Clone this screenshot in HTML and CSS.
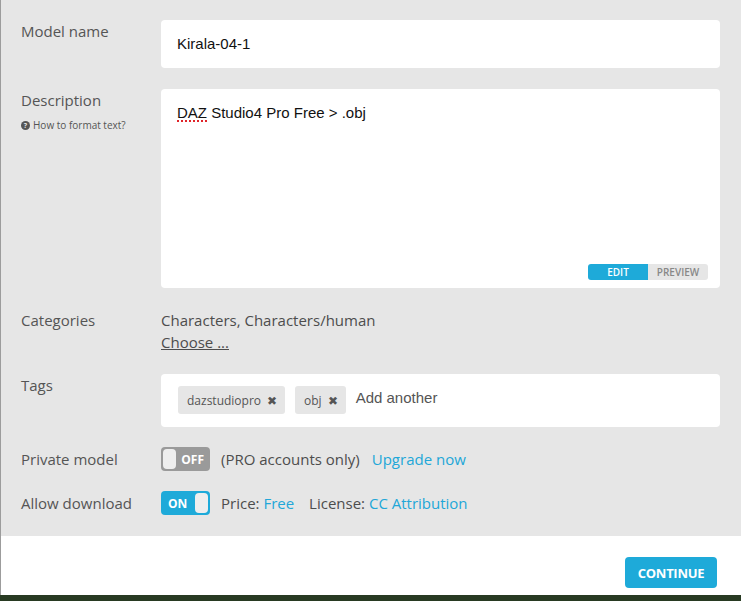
FILE: index.html
```html
<!DOCTYPE html>
<html lang="en">
<head>
    <meta charset="UTF-8">
    <title>Model settings</title>
    <link rel="stylesheet" href="styles.css">
</head>
<body>

    <div class="modal">
        <div class="form">
            <div class="row">
                <div class="label">Model name</div>
                <div class="field">
                    <div class="input">Kirala-04-1</div>
                </div>
            </div>

            <div class="row">
                <div class="label">
                    Description
                    <div class="help">
                        <span class="help-icon">?</span>
                        How to format text?
                    </div>
                </div>
                <div class="field">
                    <div class="textarea">
                        <span class="misspelled">DAZ</span> Studio4 Pro Free &gt; .obj
                        <div class="mode">
                            <span class="mode-btn active">Edit</span>
                            <span class="mode-btn">Preview</span>
                        </div>
                    </div>
                </div>
            </div>

            <div class="row">
                <div class="label">Categories</div>
                <div class="field text">
                    <div>Characters, Characters/human</div>
                    <div><a class="choose" href="#">Choose ...</a></div>
                </div>
            </div>

            <div class="row">
                <div class="label">Tags</div>
                <div class="field">
                    <div class="tags">
                        <span class="tag">dazstudiopro <span class="tag-x">&#10006;</span></span>
                        <span class="tag">obj <span class="tag-x">&#10006;</span></span>
                        <span class="tag-input">Add another</span>
                    </div>
                </div>
            </div>

            <div class="row short">
                <div class="label">Private model</div>
                <div class="field inline">
                    <span class="switch off"><span class="knob"></span><span class="switch-text">OFF</span></span>
                    <span class="note spaced-sm">(PRO accounts only)</span>
                    <a class="link" href="#">Upgrade now</a>
                </div>
            </div>

            <div class="row short">
                <div class="label">Allow download</div>
                <div class="field inline">
                    <span class="switch on"><span class="switch-text">ON</span><span class="knob"></span></span>
                    <span class="note spaced">Price: <a class="link" href="#">Free</a></span>
                    <span class="note">License: <a class="link" href="#">CC Attribution</a></span>
                </div>
            </div>
        </div>

        <div class="footer">
            <button class="button">Continue</button>
        </div>
    </div>

</body>
</html>
```

FILE: styles.css
```css
body {
    margin: 0;
    padding: 0;
    font-family: "Open Sans", sans-serif;
    background-color: #283a22; /* тёмный фон сцены под окном */
    height: 601px;
    overflow: hidden;
}

.modal {
    border-left: 1px solid #9c9c9c;
    width: 740px;
}

.form {
    background-color: #e6e6e6;
    padding: 20px 21px 21px 20px;
    display: flex;
    flex-direction: column;
    gap: 21px;
}

.row {
    display: grid;
    grid-template-columns: 140px 1fr;
}

.row.short {
    margin-top: -1px;
}

.label {
    font-size: 15px;
    line-height: 22px;
    color: #555;
}

.short .label {
    line-height: 24px;
}

.help {
    font-size: 10px;
    line-height: 14px;
    margin-top: 7px;
    display: flex;
    align-items: center;
    gap: 3px;
}

.help-icon {
    width: 9px;
    height: 9px;
    border-radius: 50%;
    background-color: #555;
    color: #e6e6e6;
    font-size: 7px;
    line-height: 9px;
    font-weight: bold;
    text-align: center;
}

.input {
    background-color: #fff;
    border-radius: 4px;
    height: 48px;
    line-height: 48px;
    padding: 0 16px;
    font-family: "Liberation Sans", Arial, sans-serif;
    font-size: 15px;
    color: #111;
}

.textarea {
    position: relative;
    background-color: #fff;
    border-radius: 4px;
    height: 199px;
    box-sizing: border-box;
    padding: 14px 16px;
    font-family: "Liberation Sans", Arial, sans-serif;
    font-size: 15px;
    line-height: 20px;
    color: #111;
}

.misspelled {
    text-decoration: underline dotted #e0242a;
    text-decoration-thickness: 2px;
    text-underline-offset: 2px;
}

/* переключатель edit / preview */
.mode {
    position: absolute;
    right: 12px;
    bottom: 8px;
    display: flex;
    border-radius: 3px;
    overflow: hidden;
}

.mode-btn {
    width: 60px;
    height: 16px;
    line-height: 16px;
    text-align: center;
    font-family: "Open Sans", sans-serif;
    font-size: 10px;
    font-weight: 600;
    text-transform: uppercase;
    color: #888;
    background-color: #e6e6e6;
}

.mode-btn.active {
    color: #fff;
    background-color: #1eaad9;
}

.text {
    font-size: 15px;
    line-height: 22px;
    color: #4d4d4d;
}

.choose {
    color: #4d4d4d;
    text-decoration: underline;
}

.tags {
    background-color: #fff;
    border-radius: 4px;
    height: 53px;
    box-sizing: border-box;
    padding: 12px 17px;
    display: flex;
    align-items: flex-start;
    gap: 10px;
}

.tag {
    display: inline-flex;
    align-items: center;
    gap: 6px;
    height: 28px;
    padding: 0 8px 0 9px;
    background-color: #e6e6e6;
    border-radius: 3px;
    font-size: 12px;
    color: #555;
}

.tag-x {
    font-size: 12px;
    color: #555;
}

.tag-input {
    font-family: "Liberation Sans", Arial, sans-serif;
    font-size: 15px;
    line-height: 24px;
    color: #555;
}

.inline {
    display: flex;
    align-items: center;
    gap: 11px;
    font-size: 15px;
    color: #4d4d4d;
}

.note.spaced-sm {
    margin-right: 1px;
}

.note.spaced {
    margin-right: 4px;
}

.link {
    color: #22a7d8;
    text-decoration: none;
}

/* тумблеры вкл/выкл */
.switch {
    width: 49px;
    height: 24px;
    box-sizing: border-box;
    padding: 2px;
    border-radius: 4px;
    display: flex;
    align-items: center;
    justify-content: space-between;
}

.switch.off {
    background-color: #9a9a9a;
}

.switch.on {
    background-color: #1eaad9;
}

.knob {
    width: 13px;
    height: 20px;
    border-radius: 4px;
    background-color: #eee;
}

.switch-text {
    font-size: 12px;
    font-weight: bold;
    color: #fff;
    padding: 0 4px 0 5px;
}

.footer {
    background-color: #fff;
    height: 59px;
    box-sizing: border-box;
    padding: 21px 24px 0 0;
    display: flex;
    justify-content: flex-end;
    align-items: flex-start;
}

.button {
    width: 92px;
    height: 31px;
    border: none;
    border-radius: 4px;
    background-color: #1eaad9;
    color: #fff;
    font-family: "Open Sans", sans-serif;
    font-size: 13px;
    font-weight: bold;
    letter-spacing: -0.3px;
    text-transform: uppercase;
    cursor: pointer;
}
```
